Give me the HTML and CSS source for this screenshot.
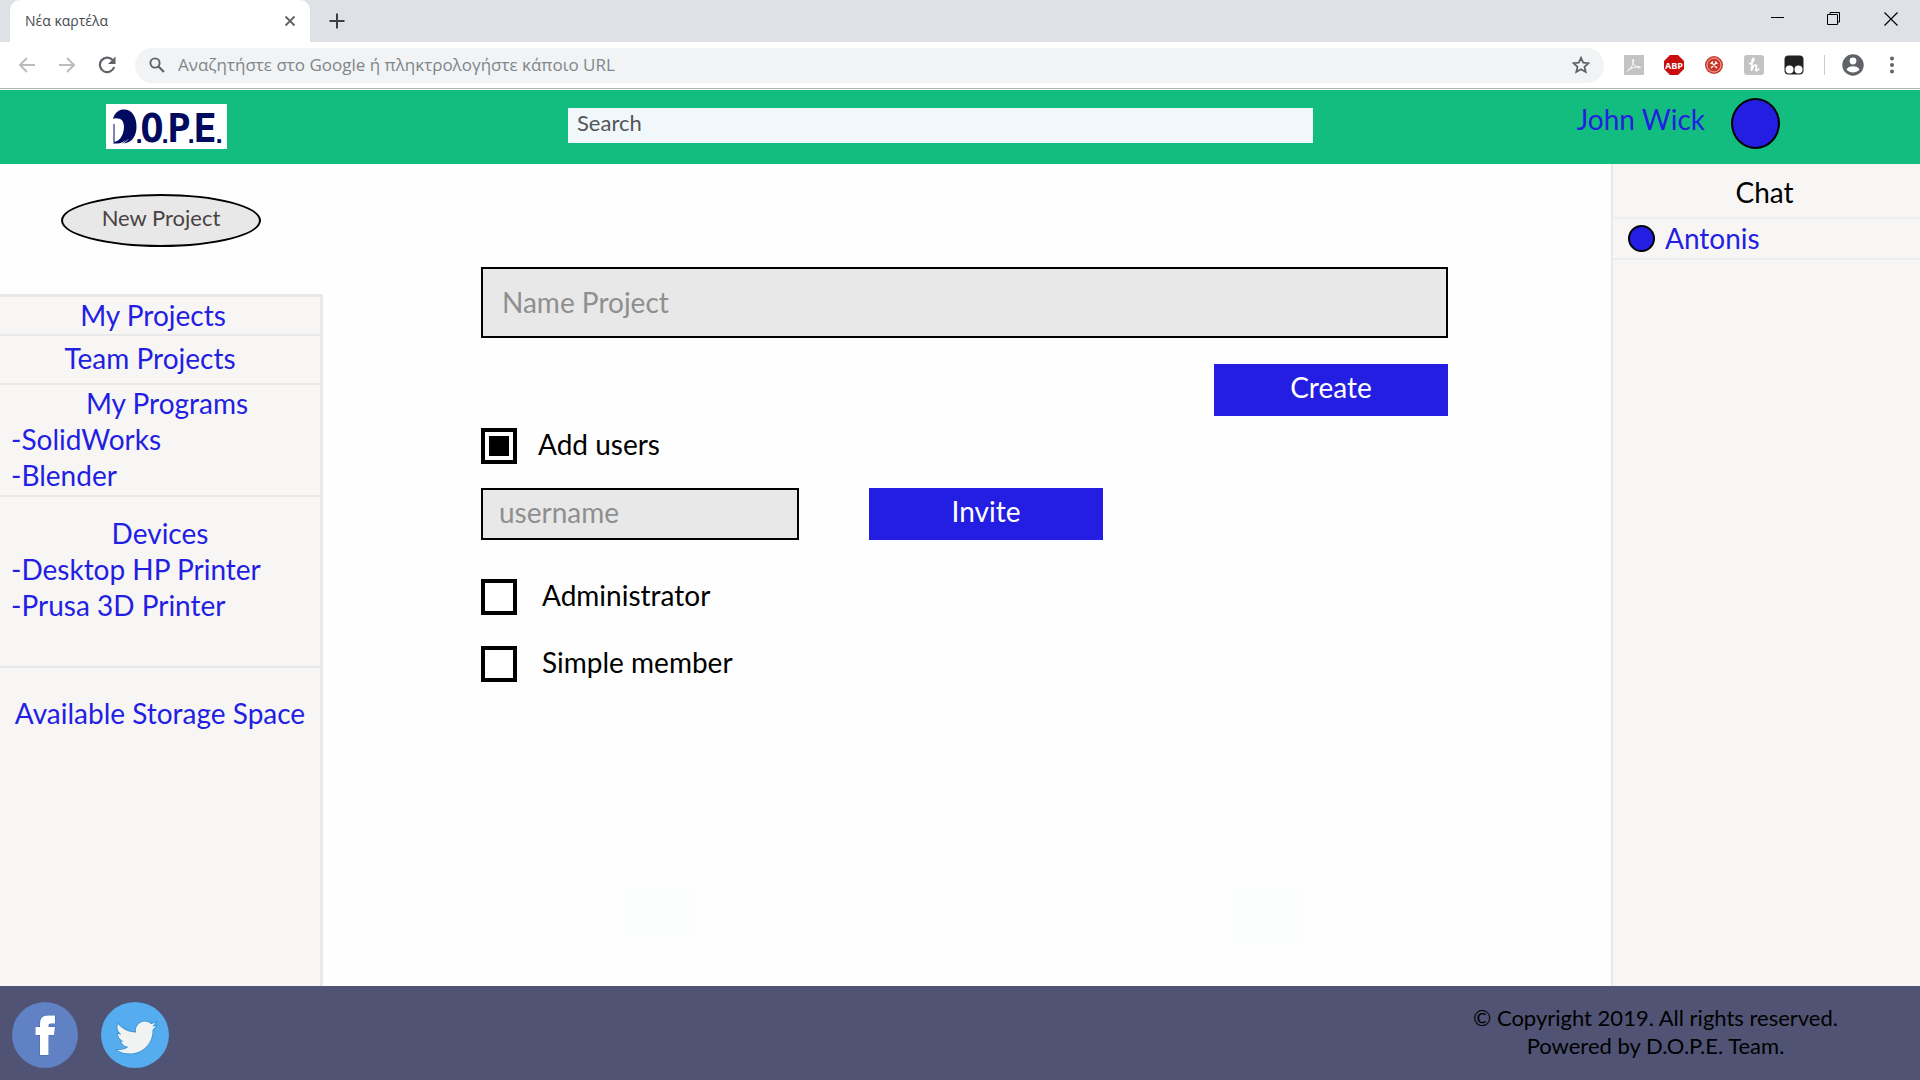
FILE: index.html
```html
<!DOCTYPE html>
<html lang="en">
<head>
<meta charset="utf-8">
<title>D.O.P.E. – New Project</title>
<link rel="stylesheet" href="styles.css">
</head>
<body>
<div class="browser">
  <div class="tabstrip">
    <div class="tab">
      <span class="tab-title" lang="el">Νέα καρτέλα</span>
      <button class="icon-btn" aria-label="Close tab"><svg width="12" height="12" viewBox="0 0 12 12"><path d="M1.500 1.500l9 9M10.500 1.500l-9 9" stroke="#5f6368" stroke-width="1.800"/></svg></button>
    </div>
    <button class="icon-btn new-tab" aria-label="New tab"><svg width="16" height="16" viewBox="0 0 16 16"><path d="M8 0.500v15M0.500 8h15" stroke="#3c4043" stroke-width="2"/></svg></button>
    <div class="window-controls">
      <button class="icon-btn" aria-label="Minimize"><svg width="14" height="14" viewBox="0 0 14 14"><path d="M1 5.500h13" stroke="#000"/></svg></button>
      <button class="icon-btn" aria-label="Restore"><svg width="14" height="14" viewBox="0 0 14 14"><path d="M0.500 2.500h10v10h-10zM3 2V0.500h9.500v9.500H11" fill="none" stroke="#000"/></svg></button>
      <button class="icon-btn" aria-label="Close"><svg width="14" height="14" viewBox="0 0 14 14"><path d="M0.500 0.500l13 13M13.500 0.500l-13 13" stroke="#000" stroke-width="1.200"/></svg></button>
    </div>
  </div>
  <div class="toolbar">
    <div class="nav-buttons">
      <button class="icon-btn" aria-label="Back"><svg width="18" height="16" viewBox="0 0 18 16"><path d="M17 8H2M9 1L2 8l7 7" fill="none" stroke="#babcbe" stroke-width="2"/></svg></button>
      <button class="icon-btn" aria-label="Forward"><svg width="18" height="16" viewBox="0 0 18 16"><path d="M1 8h15M9 1l7 7-7 7" fill="none" stroke="#babcbe" stroke-width="2"/></svg></button>
      <button class="icon-btn" aria-label="Reload"><svg width="18" height="18" viewBox="0 0 18 18"><path d="M14.500 3.800A7.300 7.300 0 1 0 16.200 11" fill="none" stroke="#5f6368" stroke-width="2.200"/><path d="M17.500 0.500v7.500H10z" fill="#5f6368"/></svg></button>
    </div>
    <div class="omnibox">
      <svg width="16" height="16" viewBox="0 0 16 16"><circle cx="6" cy="6" r="4.600" fill="none" stroke="#5f6368" stroke-width="1.900"/><path d="M9.500 9.500l5.500 5.500" stroke="#5f6368" stroke-width="2.200"/></svg>
      <input class="url" type="text" lang="el" aria-label="URL" placeholder="Αναζητήστε στο Google ή πληκτρολογήστε κάποιο URL">
      <button class="icon-btn" aria-label="Bookmark"><svg width="18" height="18" viewBox="0 0 18 18"><path d="M9 1.800l2.200 4.900 5.300.5-4 3.500 1.200 5.300L9 13.200 4.300 16l1.200-5.300-4-3.500 5.300-.5z" fill="none" stroke="#5f6368" stroke-width="1.800"/></svg></button>
    </div>
    <div class="extensions">
      <button class="icon-btn" aria-label="PDF"><svg width="20" height="20" viewBox="0 0 20 20"><rect width="20" height="20" fill="#c3c3c3"/><path d="M3.500 16c3-1.500 5.500-6 6.200-9.500.5-3-1.700-3-1.200-.5.8 3.500 3.500 6.500 7 7 1.800.2 1.500-1.400-.5-1.400-4 .2-7.500 1.400-10.500 3.200-1 .7-1.300 1.400-1 1.200z" fill="none" stroke="#fff" stroke-width="1"/></svg></button>
      <button class="icon-btn" aria-label="Adblock Plus"><svg width="20" height="20" viewBox="0 0 20 20"><path d="M6 0h8l6 6v8l-6 6H6l-6-6V6z" fill="#c70d0d"/><text class="abp" x="10" y="13.500" text-anchor="middle">ABP</text></svg></button>
      <button class="icon-btn" aria-label="Tools"><svg width="20" height="20" viewBox="0 0 20 20"><circle cx="10" cy="10" r="9" fill="#c9392b"/><circle cx="10" cy="10" r="7" fill="none" stroke="#eeb0a8"/><path d="M7 13l5-5M13 13L8 8M6.500 8.800l2.300-2.300M11.200 6.500l2.300 2.300" stroke="#fff" stroke-width="1.200"/></svg></button>
      <button class="icon-btn" aria-label="Honey"><svg width="20" height="20" viewBox="0 0 20 20"><rect width="20" height="20" rx="3" fill="#c3c3c3"/><path d="M5 9c4-1 5.500-4 4.500-5.500C8 3 8 8 7.500 16c.5-4 3.500-7 5-5.500 1 1-2.500 5.500.5 5 1.200-.3 1.600-1.200 2-2" fill="none" stroke="#fff" stroke-width="1.800"/></svg></button>
      <button class="icon-btn" aria-label="Tampermonkey"><svg width="20" height="20" viewBox="0 0 20 20"><rect x="0.500" y="0.500" width="19" height="19" rx="4" fill="#222"/><circle cx="5.500" cy="14.500" r="4" fill="#fff"/><circle cx="14.500" cy="14.500" r="4" fill="#fff"/></svg></button>
      <span class="separator"></span>
      <button class="icon-btn" aria-label="Profile"><svg width="22" height="22" viewBox="0 0 22 22"><circle cx="11" cy="11" r="10.700" fill="#5f6368"/><circle cx="11" cy="7" r="3.400" fill="#fff"/><path d="M4.500 15.500c1.500-4.500 11.500-4.500 13 0-3 4-10 4-13 0z" fill="#fff"/></svg></button>
      <button class="icon-btn menu-btn" aria-label="Menu"><svg width="4" height="18" viewBox="0 0 4 18"><g fill="#5f6368"><circle cx="2" cy="2.500" r="2"/><circle cx="2" cy="9" r="2"/><circle cx="2" cy="15.500" r="2"/></g></svg></button>
    </div>
  </div>
</div>

<header class="site-header">
  <a class="logo" href="#" aria-label="D.O.P.E. home">
    <svg width="121" height="45" viewBox="0 0 121 45">
      <path d="M7 15C9 8 13 5.500 18 5.500c8 0 12.500 7.500 12.500 17S26 38.500 18 39.500c2-1.500 3.500-3 4.500-5-2.500 3-4.500 4.500-7 5 2-1 3.500-2.500 4.500-4-2 2-5 4-9 4H7l1-1.500C19 37 22 14 11.500 14.500 9.500 14 8 14.200 7 15z" fill="#000a5e"/>
      <path d="M8 20v18" stroke="#000a5e" stroke-width="1"/>
      <g class="logo-letters" text-anchor="middle">
        <text y="38" x="46 73 99">OPE</text>
        <text class="logo-dots" y="39" x="33 59 85 113">....</text>
      </g>
    </svg>
  </a>
  <input class="search" type="search" aria-label="Search" placeholder="Search">
  <a class="user" href="#"><span class="user-name">John Wick</span><span class="avatar"></span></a>
</header>

<div class="content">
  <aside class="sidebar">
    <button class="new-project">New Project</button>
    <nav class="side-nav">
      <section class="nav-row"><a class="nav-title" href="#">My Projects</a></section>
      <section class="nav-row team"><a class="nav-title" href="#">Team Projects</a></section>
      <section class="nav-row programs">
        <a class="nav-title" href="#">My Programs</a>
        <a href="#">-SolidWorks</a>
        <a href="#">-Blender</a>
      </section>
      <section class="nav-row devices">
        <a class="nav-title" href="#">Devices</a>
        <a href="#">-Desktop HP Printer</a>
        <a href="#">-Prusa 3D Printer</a>
      </section>
      <section class="storage"><a class="nav-title" href="#">Available Storage Space</a></section>
    </nav>
  </aside>

  <main class="main">
    <form class="project-form">
      <input class="field name-field" type="text" aria-label="Name Project" placeholder="Name Project">
      <button class="primary create" type="button">Create</button>
      <label class="check"><input type="checkbox" checked><span>Add users</span></label>
      <div class="invite-row">
        <input class="field user-field" type="text" aria-label="username" placeholder="username">
        <button class="primary" type="button">Invite</button>
      </div>
      <label class="check role"><input type="checkbox"><span>Administrator</span></label>
      <label class="check role"><input type="checkbox"><span>Simple member</span></label>
    </form>
    <div class="tints"><span class="tint"></span><span class="tint tall"></span></div>
  </main>

  <aside class="chat">
    <h2 class="chat-title">Chat</h2>
    <a class="contact" href="#"><span class="status"></span>Antonis</a>
  </aside>
</div>

<footer class="footer">
  <div class="social">
    <a href="#" aria-label="Facebook"><svg width="66" height="66" viewBox="0 0 66 66"><circle cx="33" cy="33" r="33" fill="#6081c4"/><path d="M28 53V33h-4.500v-8H28v-3.500c0-5.500 3-8 8-8h7v8h-4c-2 0-2.500.8-2.500 2.500v1H43l-1 8h-5.500v20z" fill="#fff" stroke="#4466b0" stroke-width="1" paint-order="stroke"/></svg></a>
    <a href="#" aria-label="Twitter"><svg width="68" height="66" viewBox="0 0 68 66"><ellipse cx="34" cy="33" rx="34" ry="33" fill="#55acee"/><path d="M17 22c4 5 10 8 18 8.500-1-6 3-11 8.500-11 3 0 5 1 6.500 2.700l4.500-1.800-3 4 3.500-.5-3.500 4C52 41 42 51.500 29 51.500c-5 0-9.500-1-13-3.500 5 .3 8.500-1 11.500-3-4-.5-6.500-2.500-7.500-5.500h3c-3.500-1.500-6-4-6-8 1 .6 2 .9 3.500 1C17 30 15.500 26 17 22z" fill="#f1f2f2" stroke="#3690d0" stroke-width="1.500" paint-order="stroke"/></svg></a>
  </div>
  <p class="copyright">© Copyright 2019. All rights reserved.<br>Powered by D.O.P.E. Team.</p>
</footer>
</body>
</html>
```
FILE: styles.css
```css
:root {
  --blue: #231ee1;
  --green: #12bd7f;
  --panel: #f7f6f5;
  --line: #e9e9e9;
  --field: #e8e8e8;
}

* { box-sizing: border-box; }

body {
  margin: 0;
  min-height: 100vh;
  display: flex;
  flex-direction: column;
  background: #fefefe;
  color: #000;
  font: 28px/36px Lato, "Open Sans", sans-serif;
}

a { color: var(--blue); text-decoration: none; }
button, input { font: inherit; }
svg { display: block; }

.icon-btn {
  display: block;
  padding: 0;
  border: 0;
  background: none;
}

/* Browser frame */
.browser {
  border-bottom: 1px solid #fff;
  font: 17px/20px "Open Sans", "Noto Sans", sans-serif;
}

.tabstrip {
  display: flex;
  align-items: center;
  height: 42px;
  padding-left: 10px;
  background: #dee1e6;
}

.tab {
  display: flex;
  align-items: center;
  justify-content: space-between;
  width: 300px;
  height: 42px;
  padding: 0 14px 0 15px;
  border-radius: 10px 10px 0 0;
  background: #fff;
}

.tab-title { font-size: 14px; color: #45494d; }
.new-tab { margin-left: 19px; }

.window-controls {
  display: flex;
  gap: 43px;
  margin-left: auto;
  padding: 0 22px 4px 0;
}

.toolbar {
  display: flex;
  align-items: center;
  height: 47px;
  padding: 0 26px 0 18px;
  border-bottom: 1px solid #b3b3b3;
  background: #fff;
}

.nav-buttons { display: flex; align-items: center; gap: 22px; margin-right: 19px; }

.omnibox {
  flex: 1;
  display: flex;
  align-items: center;
  gap: 13px;
  height: 35px;
  padding: 0 14px;
  border-radius: 18px;
  background: #f1f3f4;
}

.url {
  flex: 1;
  padding: 0;
  border: 0;
  background: none;
}

.url::placeholder { color: #80868b; opacity: 1; }

.extensions { display: flex; align-items: center; gap: 20px; margin-left: 20px; }
.abp { font: bold 9px "Open Sans", sans-serif; fill: #fff; }
.separator { width: 1px; height: 20px; margin-right: -3px; background: #ccc; }
.menu-btn { margin-left: 6px; }

/* Site header */
.site-header {
  display: flex;
  align-items: center;
  height: 74px;
  padding: 0 140px 2px 106px;
  background: var(--green);
}

.logo { background: #fff; }
.logo-letters { font: bold 39px "DejaVu Sans Mono", monospace; fill: #000a5e; }
.logo-dots { font-size: 22px; }

.search {
  flex: 1;
  height: 35px;
  margin: 0 264px 2px 341px;
  padding: 0 9px 4px;
  border: 0;
  background: #f0f8fb;
  font-size: 22px;
}

.search::placeholder { color: #555; opacity: 1; }

.user { display: flex; align-items: center; gap: 26px; padding-bottom: 6px; }
.user-name { padding-bottom: 8px; }

.avatar, .status {
  border: 2px solid #000;
  border-radius: 50%;
  background: var(--blue);
}

.avatar { width: 49px; height: 51px; }

/* Columns */
.content {
  flex: 1;
  display: grid;
  grid-template-columns: 323px 1fr 309px;
}

.sidebar { display: flex; flex-direction: column; }

.new-project {
  width: 200px;
  height: 53px;
  margin: 30px 0 47px 61px;
  padding: 0 0 5px;
  border: 2px solid #000;
  border-radius: 50%;
  background: var(--field);
  color: #4b4243;
  font-size: 22px;
}

.side-nav {
  flex: 1;
  border-top: 3px solid var(--line);
  border-right: 3px solid var(--line);
  background: var(--panel);
}

.side-nav a { display: block; padding-left: 11px; }
.side-nav .nav-title { padding: 0; text-align: center; }
.nav-row { border-bottom: 2px solid var(--line); }
.nav-row:first-child { padding: 0 14px 1px 0; }
.team { padding: 0 20px 3px 0; line-height: 44px; }
.programs { padding: 0 0 2px; }
.programs .nav-title { padding-left: 14px; }
.devices { padding: 18px 0 43px; }
.storage { padding: 27px 0; }

/* Project form */
.main {
  display: flex;
  flex-direction: column;
  padding: 103px 163px 37px 158px;
}

.project-form { display: flex; flex-direction: column; }

.field {
  padding: 0 16px;
  border: 2px solid #000;
  background: var(--field);
}

.field::placeholder { color: #8f8f8f; opacity: 1; }
.name-field { height: 71px; padding: 0 19px 2px; }
.user-field { width: 318px; height: 52px; padding-bottom: 4px; }

.primary {
  width: 234px;
  height: 52px;
  padding: 0 0 6px;
  border: 0;
  background: var(--blue);
  color: #fff;
}

.create { align-self: flex-end; margin: 26px 0 12px; }

.check {
  display: flex;
  align-items: center;
  gap: 21px;
  height: 36px;
}

.check span { padding-bottom: 4px; }

.check input {
  appearance: none;
  width: 36px;
  height: 36px;
  margin: 0;
  border: 4px solid #000;
  background: #fff;
}

.check input:checked {
  padding: 4px;
  background: #000 content-box;
  box-shadow: inset 0 0 0 4px #fff;
}

.invite-row { display: flex; gap: 70px; margin: 24px 0 8px; }
.role { gap: 25px; margin-top: 31px; }

.tints {
  display: flex;
  justify-content: space-between;
  height: 61px;
  margin: auto 144px 0;
}

.tint { width: 71px; height: 52px; background: #fbfefd; }
.tall { height: 61px; }

/* Chat */
.chat {
  border-left: 2px solid var(--line);
  background: var(--panel);
}

.chat-title {
  margin: 0;
  padding: 10px 4px 7px 0;
  border-bottom: 2px solid #eee;
  font: inherit;
  text-align: center;
}

.contact {
  display: flex;
  align-items: center;
  gap: 10px;
  height: 41px;
  padding: 0 0 1px 15px;
  border-bottom: 2px solid #eee;
}

.status { width: 27px; height: 27px; }

/* Footer */
.footer {
  display: flex;
  align-items: center;
  justify-content: space-between;
  min-height: 94px;
  padding: 0 82px 0 12px;
  background: #505374;
}

.social { display: flex; gap: 23px; padding-top: 4px; }
.copyright { margin: 0; padding-bottom: 2px; font-size: 22px; line-height: 28px; text-align: center; }
```
